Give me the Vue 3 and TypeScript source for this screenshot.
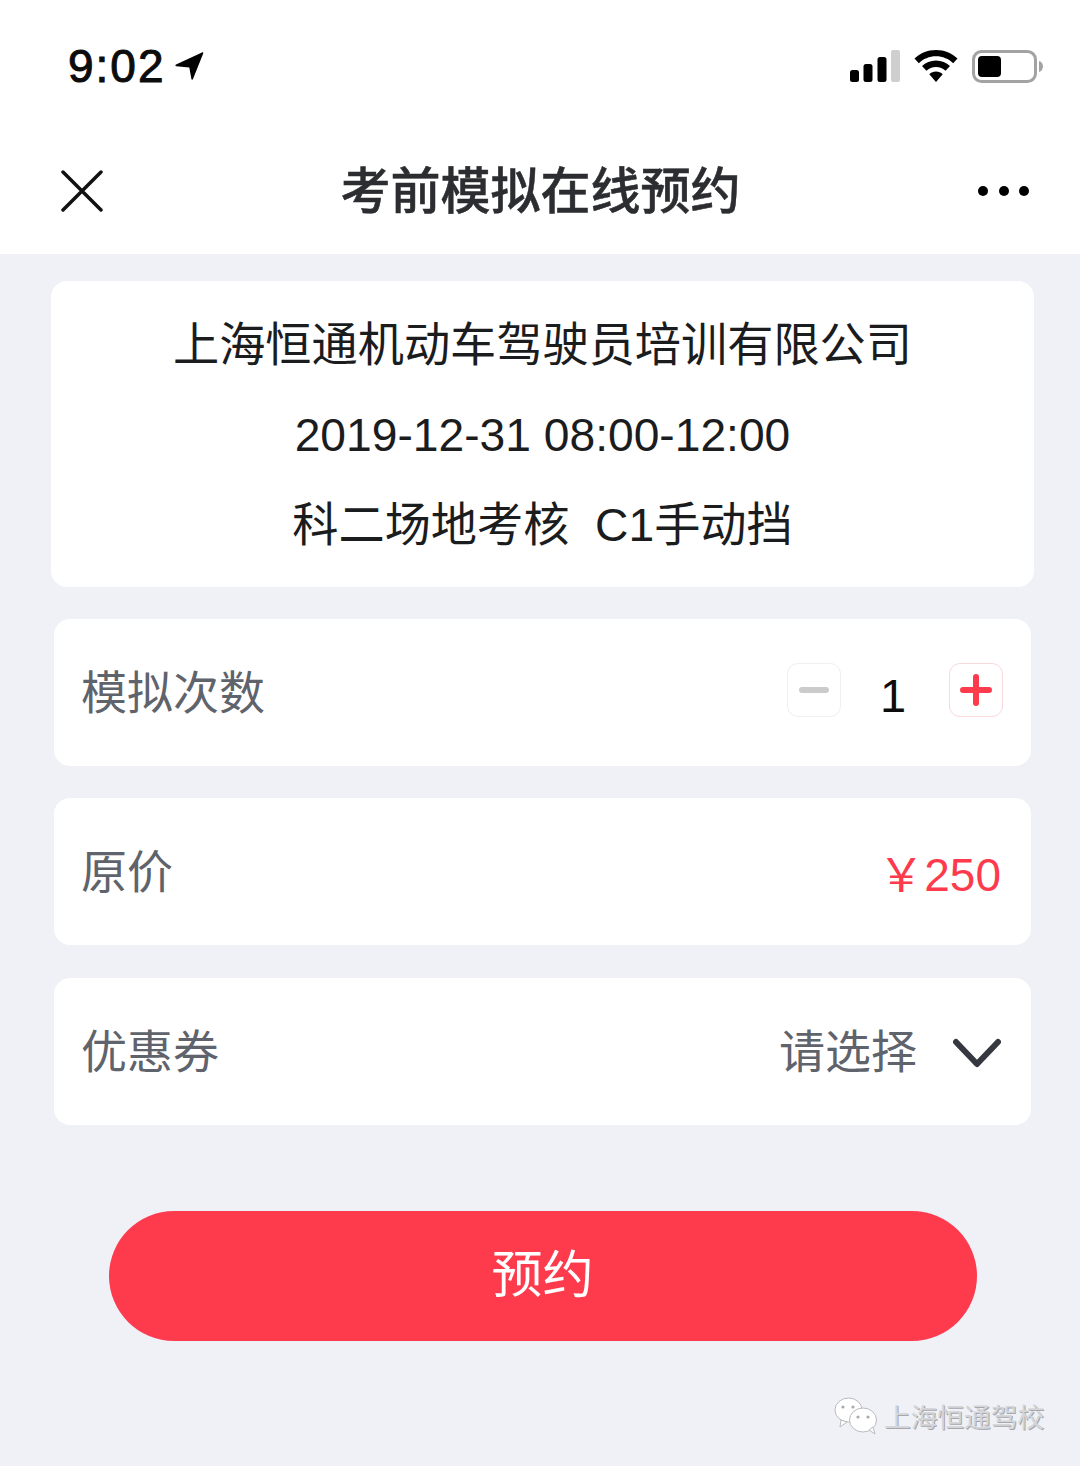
<script setup lang="ts">
const infoLines = ['上海恒通机动车驾驶员培训有限公司', '2019-12-31 08:00-12:00', '科二场地考核  C1手动挡']
</script>

<template>
  <div class="page">
    <header class="top">
      <div class="status">
        <div class="time">
          <span>9:02</span>
          <svg class="arrow" width="30" height="30" viewBox="0 0 30 30">
            <path d="M2 14.500 28 2.500c.9-.4 1.500.2 1.200 1.100L19 29c-.4.9-1.400.8-1.600-.1L15.300 17.500 2.300 16.300c-1-.1-1.200-1.300-.3-1.800Z" fill="#000" />
          </svg>
        </div>
        <div class="status-icons">
          <svg width="50" height="32" viewBox="0 0 50 32">
            <rect x="0" y="20" width="9" height="12" rx="2.500" fill="#000" />
            <rect x="13.500" y="14" width="9" height="18" rx="2.500" fill="#000" />
            <rect x="27.500" y="7" width="9" height="25" rx="2.500" fill="#000" />
            <rect x="41" y="0" width="9" height="32" rx="2" fill="#cfcfcf" />
          </svg>
          <svg class="wifi" width="44" height="32" viewBox="0 0 44 32">
            <path d="M22 0C13.500 0 6 3.300.500 8.500l4.300 4.700C9.200 9 15.300 6.300 22 6.300S34.800 9 39.200 13.200l4.300-4.700C38 3.300 30.500 0 22 0Z" fill="#000" />
            <path d="M22 10.500c-5.500 0-10.400 2.100-14 5.600l4.400 4.700c2.500-2.400 5.900-3.900 9.600-3.900s7.100 1.500 9.600 3.900l4.400-4.700C32.400 12.600 27.500 10.500 22 10.500Z" fill="#000" />
            <path d="M22 21.500c-2.600 0-5 1-6.700 2.700L22 32l6.700-7.800C27 22.500 24.600 21.500 22 21.500Z" fill="#000" />
          </svg>
          <svg class="battery" width="72" height="34" viewBox="0 0 72 34">
            <rect x="1.500" y="1.500" width="62" height="30" rx="8" fill="none" stroke="#a3a3a3" stroke-width="3" />
            <rect x="6" y="6" width="23" height="21" rx="4" fill="#000" />
            <path d="M67 11c2.600.8 4 3 4 5.500S69.600 21.200 67 22Z" fill="#a3a3a3" />
          </svg>
        </div>
      </div>
      <nav class="nav">
        <svg class="close" width="42" height="42" viewBox="0 0 42 42">
          <path d="M2 2 40 40M40 2 2 40" stroke="#111" stroke-width="3.500" stroke-linecap="round" />
        </svg>
        <h1>考前模拟在线预约</h1>
        <div class="dots"><i></i><i></i><i></i></div>
      </nav>
    </header>

    <main class="content">
      <section class="info">
        <p v-for="line in infoLines" :key="line">{{ line }}</p>
      </section>

      <div class="rows">
        <div class="row">
          <span class="label">模拟次数</span>
          <div class="stepper">
            <div class="step minus"><b></b></div>
            <span class="count">1</span>
            <div class="step plus">
              <svg width="32" height="32" viewBox="0 0 32 32">
                <path d="M3 16H29M16 3V29" stroke="#fe3b4d" stroke-width="6" stroke-linecap="round" />
              </svg>
            </div>
          </div>
        </div>
        <div class="row">
          <span class="label">原价</span>
          <span class="price">￥250</span>
        </div>
        <div class="row">
          <span class="label">优惠券</span>
          <div class="select">
            <span>请选择</span>
            <svg class="chevron" width="48" height="32" viewBox="0 0 48 32">
              <path d="M3 5 24 27 45 5" fill="none" stroke="#35383e" stroke-width="6" stroke-linecap="round" stroke-linejoin="round" />
            </svg>
          </div>
        </div>
      </div>

      <button class="submit" type="button"><span>预约</span></button>
    </main>

    <footer class="mark">
      <svg width="44" height="38" viewBox="0 0 44 38">
        <ellipse cx="14.500" cy="13" rx="13.500" ry="12" fill="#fff" stroke="#b9bbbf" stroke-width="1" />
        <path d="M7 23 6 30 13 25Z" fill="#fff" stroke="#b9bbbf" stroke-width="1" />
        <ellipse cx="29" cy="23" rx="13.500" ry="12" fill="#fff" stroke="#b9bbbf" stroke-width="1" />
        <path d="M35 33 41 37 39 30Z" fill="#fff" stroke="#b9bbbf" stroke-width="1" />
        <circle cx="9" cy="10" r="1.600" fill="#aaa" />
        <circle cx="19" cy="10" r="1.600" fill="#aaa" />
        <circle cx="24" cy="20" r="1.600" fill="#aaa" />
        <circle cx="34" cy="20" r="1.600" fill="#aaa" />
      </svg>
      <span>上海恒通驾校</span>
    </footer>
  </div>
</template>

<style>
html,
body {
  margin: 0;
  background: #eff1f6;
}
</style>

<style scoped>
.page {
  position: relative;
  width: 1080px;
  height: 1466px;
  overflow: hidden;
  background: #eff1f6;
  font-family: "Liberation Sans", "Noto Sans CJK SC", sans-serif;
}

.top {
  height: 254px;
  background: #fff;
}

.status {
  height: 130px;
  box-sizing: border-box;
  padding: 44px 36px 0 68px;
  display: flex;
  justify-content: space-between;
  align-items: flex-start;
}

.time {
  display: flex;
  align-items: center;
  gap: 8px;
  font-size: 46px;
  line-height: 44px;
  font-weight: 500;
  color: #0c0c0c;
  letter-spacing: 2px;
  -webkit-text-stroke: 1px #0c0c0c;
}

.arrow {
  margin-top: -3px;
}

.status-icons {
  display: flex;
  align-items: flex-start;
  padding-top: 6px;
}

.wifi {
  margin: 0 14px 0 14px;
}

.nav {
  height: 124px;
  box-sizing: border-box;
  padding: 0 51px 0 61px;
  display: flex;
  align-items: center;
  justify-content: space-between;
}

.close {
  display: block;
  margin-top: -3px;
}

.nav h1 {
  margin: 0;
  font-size: 50px;
  font-weight: 500;
  line-height: 60px;
  color: #2c2d30;
  -webkit-text-stroke: 0.5px #2c2d30;
}

.dots {
  display: flex;
  gap: 10.500px;
  margin-top: -3px;
}

.dots i {
  width: 10px;
  height: 10px;
  border-radius: 50%;
  background: #000;
}

.content {
  box-sizing: border-box;
  padding: 27px 0 0 5px;
  display: flex;
  flex-direction: column;
  align-items: center;
}

.info {
  width: 983px;
  height: 306px;
  box-sizing: border-box;
  padding-top: 2px;
  border-radius: 16px;
  background: #fff;
  display: flex;
  flex-direction: column;
  align-items: center;
  justify-content: center;
  gap: 33px;
}

.info p {
  margin: 0;
  font-size: 46.200px;
  line-height: 57px;
  color: #1b1c1e;
  white-space: pre;
}

.rows {
  margin-top: 32px;
  width: 977px;
  display: flex;
  flex-direction: column;
  gap: 32.400px;
}

.row {
  height: 147px;
  box-sizing: border-box;
  padding: 0 30px 0 27px;
  border-radius: 16px;
  background: #fff;
  display: flex;
  align-items: center;
  justify-content: space-between;
}

.label {
  font-size: 46px;
  color: #5f636c;
  margin-top: -7px;
}

.stepper {
  display: flex;
  align-items: center;
  margin-right: -2px;
}

.step {
  width: 54px;
  height: 54px;
  box-sizing: border-box;
  border-radius: 11px;
  border: 1px solid #f0eff1;
  display: flex;
  align-items: center;
  justify-content: center;
  margin-top: -6px;
}

.step.plus {
  border-color: #f8d9dc;
}

.minus b {
  width: 30px;
  height: 6px;
  border-radius: 3px;
  background: #cbcbcb;
}

.count {
  width: 108px;
  box-sizing: border-box;
  padding-right: 4px;
  text-align: center;
  font-size: 47px;
  line-height: 54px;
  color: #0c0c0c;
  margin-top: 6px;
}

.price {
  font-size: 46px;
  color: #fe3b4d;
  margin-top: -2px;
}

.select {
  display: flex;
  align-items: center;
  gap: 36px;
  font-size: 46px;
  color: #5f636c;
}

.select span {
  margin-top: -7px;
}

.chevron {
  margin-top: 4px;
}

.submit {
  margin-top: 86px;
  width: 868px;
  height: 130px;
  border: 0;
  padding: 0;
  border-radius: 65px;
  background: #fe3b4d;
  color: #fff;
  font-family: inherit;
  font-size: 51px;
}

.submit span {
  display: block;
  margin-top: -10px;
}

.mark {
  position: absolute;
  left: 834px;
  top: 1396px;
  display: flex;
  align-items: center;
  gap: 6px;
  font-size: 26.700px;
  color: #d4d6da;
  text-shadow: 1px 1px 0 #a5a7ab;
}
</style>
